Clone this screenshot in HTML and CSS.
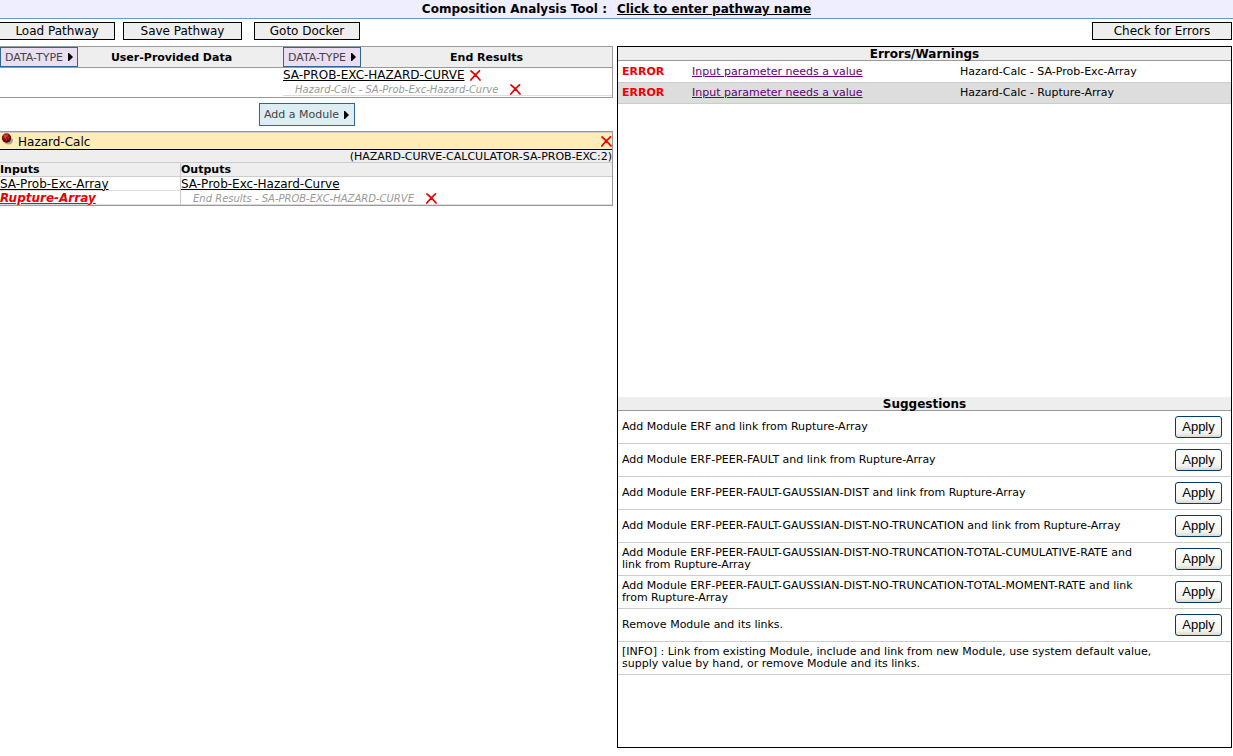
FILE: index.html
```html
<!DOCTYPE html>
<html lang="en">
<head>
<meta charset="utf-8">
<title>Composition Analysis Tool</title>
<link rel="stylesheet" href="styles.css">
</head>
<body>
<svg class="defs" aria-hidden="true">
  <symbol id="cross" viewBox="0 0 11 11"><path d="M1 1C3 2.500 8 7.500 10 10M9.500 .8C7 3 3 7 .8 10" fill="none" stroke="#f00000" stroke-width="1.700" stroke-linecap="round"/></symbol>
  <symbol id="arrow" viewBox="0 0 5 8"><path d="M0 0H1L5 4L1 8H0Z" fill="#000"/></symbol>
</svg>
<header class="title-bar">
  <h1 class="title">Composition Analysis Tool :</h1>
  <a class="pathway-name" href="#name">Click to enter pathway name</a>
</header>
<nav class="toolbar">
  <button class="tool load">Load Pathway</button>
  <button class="tool save">Save Pathway</button>
  <button class="tool docker">Goto Docker</button>
  <button class="tool check">Check for Errors</button>
</nav>
<main class="workspace">
  <section class="editor">
    <div class="results">
      <div class="data-col user-data">
        <div class="data-head"><button class="menu">DATA-TYPE<svg class="arrow"><use href="#arrow"/></svg></button><h2 class="head-text">User-Provided Data</h2></div>
      </div>
      <div class="data-col">
        <div class="data-head"><button class="menu">DATA-TYPE<svg class="arrow"><use href="#arrow"/></svg></button><h2 class="head-text">End Results</h2></div>
        <div class="item"><a class="param" href="#result">SA-PROB-EXC-HAZARD-CURVE</a><button class="remove" aria-label="Remove result"><svg class="cross"><use href="#cross"/></svg></button></div>
        <div class="item link-item"><span class="link-text">Hazard-Calc - SA-Prob-Exc-Hazard-Curve</span><button class="remove" aria-label="Remove link"><svg class="cross"><use href="#cross"/></svg></button></div>
      </div>
    </div>
    <button class="menu add-module">Add a Module<svg class="arrow"><use href="#arrow"/></svg></button>
    <article class="module">
      <div class="module-head">
        <svg class="ball" viewBox="0 0 12 12"><defs><radialGradient id="red" cx=".4" cy=".3" r=".7"><stop offset="0" stop-color="#d54a3c"/><stop offset=".45" stop-color="#9c0d0d"/><stop offset="1" stop-color="#3c0000"/></radialGradient></defs><ellipse cx="7.500" cy="7.500" rx="4.500" ry="4" fill="#777" opacity=".6"/><circle cx="5.500" cy="5" r="4.700" fill="url(#red)"/><path d="M3 3h1M6 2h1M4 5h1M7 5h1M5 7h1" stroke="#e66b5b" stroke-width=".7"/></svg>
        <h2 class="module-name">Hazard-Calc</h2>
        <button class="remove" aria-label="Remove module"><svg class="cross"><use href="#cross"/></svg></button>
      </div>
      <div class="module-type">(HAZARD-CURVE-CALCULATOR-SA-PROB-EXC:2)</div>
      <div class="ports">
        <div class="port-col inputs">
          <h3 class="port-head">Inputs</h3>
          <div class="item ruled"><a class="param" href="#array">SA-Prob-Exc-Array</a></div>
          <div class="item ruled"><a class="param missing" href="#rupture">Rupture-Array</a></div>
        </div>
        <div class="port-col">
          <h3 class="port-head">Outputs</h3>
          <div class="item"><a class="param" href="#curve">SA-Prob-Exc-Hazard-Curve</a></div>
          <div class="item link-item"><span class="link-text">End Results - SA-PROB-EXC-HAZARD-CURVE</span><button class="remove" aria-label="Remove link"><svg class="cross"><use href="#cross"/></svg></button></div>
        </div>
      </div>
    </article>
  </section>
  <aside class="report">
    <section class="pane">
      <h2 class="pane-head">Errors/Warnings</h2>
      <table class="errors">
        <tr><td class="level">ERROR</td><td class="message"><a class="error-link" href="#error1">Input parameter needs a value</a></td><td>Hazard-Calc - SA-Prob-Exc-Array</td></tr>
        <tr class="alt"><td class="level">ERROR</td><td class="message"><a class="error-link" href="#error2">Input parameter needs a value</a></td><td>Hazard-Calc - Rupture-Array</td></tr>
      </table>
    </section>
    <section class="pane">
      <h2 class="pane-head">Suggestions</h2>
      <ul class="suggestions">
        <li class="suggestion"><span>Add Module ERF and link from Rupture-Array</span><button class="apply">Apply</button></li>
        <li class="suggestion"><span>Add Module ERF-PEER-FAULT and link from Rupture-Array</span><button class="apply">Apply</button></li>
        <li class="suggestion"><span>Add Module ERF-PEER-FAULT-GAUSSIAN-DIST and link from Rupture-Array</span><button class="apply">Apply</button></li>
        <li class="suggestion"><span>Add Module ERF-PEER-FAULT-GAUSSIAN-DIST-NO-TRUNCATION and link from Rupture-Array</span><button class="apply">Apply</button></li>
        <li class="suggestion"><span>Add Module ERF-PEER-FAULT-GAUSSIAN-DIST-NO-TRUNCATION-TOTAL-CUMULATIVE-RATE and<br>link from Rupture-Array</span><button class="apply">Apply</button></li>
        <li class="suggestion"><span>Add Module ERF-PEER-FAULT-GAUSSIAN-DIST-NO-TRUNCATION-TOTAL-MOMENT-RATE and link<br>from Rupture-Array</span><button class="apply">Apply</button></li>
        <li class="suggestion"><span>Remove Module and its links.</span><button class="apply">Apply</button></li>
        <li class="suggestion"><span>[INFO] : Link from existing Module, include and link from new Module, use system default value,<br>supply value by hand, or remove Module and its links.</span></li>
      </ul>
    </section>
  </aside>
</main>
</body>
</html>
```
FILE: styles.css
```css
* { box-sizing: border-box; }
body {
  margin: 0;
  min-height: 100vh;
  display: flex;
  flex-direction: column;
  padding-bottom: 8px;
  background: #fff;
  color: #000;
  font: 11px/13px Verdana, "DejaVu Sans", sans-serif;
}
h1, h2, h3 { margin: 0; font-size: 11px; }
button { font: inherit; color: inherit; }
.defs { display: none; }
.title-bar {
  display: flex;
  justify-content: center;
  gap: 10px;
  height: 19px;
  padding-top: 3px;
  font-size: 12px;
  background: #eeeeff;
  border-bottom: 1px solid #6699cc;
}
.title { font-size: 12px; }
.pathway-name { font-weight: bold; color: #000; }
.toolbar { display: flex; padding: 3px 1px 6px 0; }
.tool {
  height: 18px;
  padding: 0;
  font-size: 12px;
  background: #eee;
  border: 1px solid #000;
}
.load { width: 116px; margin: 0 8px 0 -1px; }
.save { width: 119px; margin-right: 12px; }
.docker { width: 106px; }
.check { width: 140px; margin-left: auto; }
.workspace {
  flex: 1;
  display: grid;
  grid-template-columns: 613fr 615fr;
  gap: 4px;
  padding-right: 1px;
}
.editor { min-width: 0; }
.report {
  min-width: 0;
  display: flex;
  flex-direction: column;
  border: 1px solid #000;
}
.results {
  display: grid;
  grid-template-columns: 283fr 329fr;
  border: 1px solid #999;
  border-left: 0;
  white-space: nowrap;
}
.data-col { min-width: 0; padding-bottom: 1px; }
.data-head {
  display: flex;
  height: 21px;
  background: #eee;
  border-bottom: 1px solid #999;
}
.head-text { flex: 1; text-align: center; line-height: 21px; }
.user-data .head-text { padding-right: 18px; }
.menu {
  display: flex;
  align-items: center;
  justify-content: center;
  gap: 5px;
  height: 20px;
  width: 78px;
  padding: 0;
  color: #444;
  background: #eadff2;
  border: 1px solid #336688;
}
.arrow { width: 5px; height: 8px; }
.add-module {
  width: 96px;
  height: 23px;
  margin: 5px auto;
  background: #dceef4;
}
.item { display: flex; align-items: center; height: 14px; white-space: nowrap; }
.param { color: #000; font-size: 12px; }
.missing { color: #e00; font-weight: bold; font-style: italic; }
.link-item { padding-left: 12px; box-shadow: inset 0 -1px #ddd; }
.link-text { color: #999; font-size: 10px; font-style: italic; }
.remove { display: flex; padding: 0; margin-left: 5px; border: 0; background: none; }
.link-item .remove { margin-left: 12px; }
.cross { width: 11px; height: 11px; }
.module { border: 1px solid #999; border-left: 0; }
.module-head {
  display: flex;
  align-items: center;
  height: 18px;
  border-top: 1px solid #ccc;
  border-bottom: 1px solid #000;
  background: #ffecb8;
}
.ball { width: 12px; height: 12px; margin: 0 5px 4px 1px; }
.module-name { flex: 1; font-size: 12px; font-weight: normal; padding-top: 3px; }
.module-type {
  height: 13px;
  text-align: right;
  background: #eee;
  border-bottom: 1px solid #ccc;
}
.ports { display: flex; }
.port-col { flex: 1; min-width: 0; }
.inputs { flex: 0 0 181px; border-right: 1px solid #ccc; }
.port-head { height: 14px; line-height: 14px; background: #eee; border-bottom: 1px solid #ccc; }
.ruled { box-shadow: inset 0 -1px #ddd; }
.pane { flex: 1 1 0; }
.pane-head { height: 14px; font-size: 12px; line-height: 14px; text-align: center; background: #eee; border-bottom: 1px solid #999; }
.errors { width: 100%; border-collapse: collapse; table-layout: fixed; }
.errors td { height: 21px; padding: 0 4px; border-bottom: 1px solid #ccc; }
.errors .level { width: 70px; color: #f00000; font-weight: bold; }
.errors .message { width: 268px; }
.alt { background: #ddd; }
.error-link { color: #660077; }
.suggestions { margin: 0; padding: 0; list-style: none; }
.suggestion {
  display: flex;
  align-items: center;
  justify-content: space-between;
  height: 33px;
  padding: 0 9px 0 4px;
  line-height: 12px;
  white-space: nowrap;
  border-bottom: 1px solid #ccc;
}
.apply {
  width: 47px;
  height: 22px;
  padding: 0;
  font: 13px/16px "Liberation Sans", Arial, sans-serif;
  background: linear-gradient(#fff, #f3f3ee 80%, #dcd8cf);
  border: 1px solid #003c74;
  border-radius: 3px;
}
```
